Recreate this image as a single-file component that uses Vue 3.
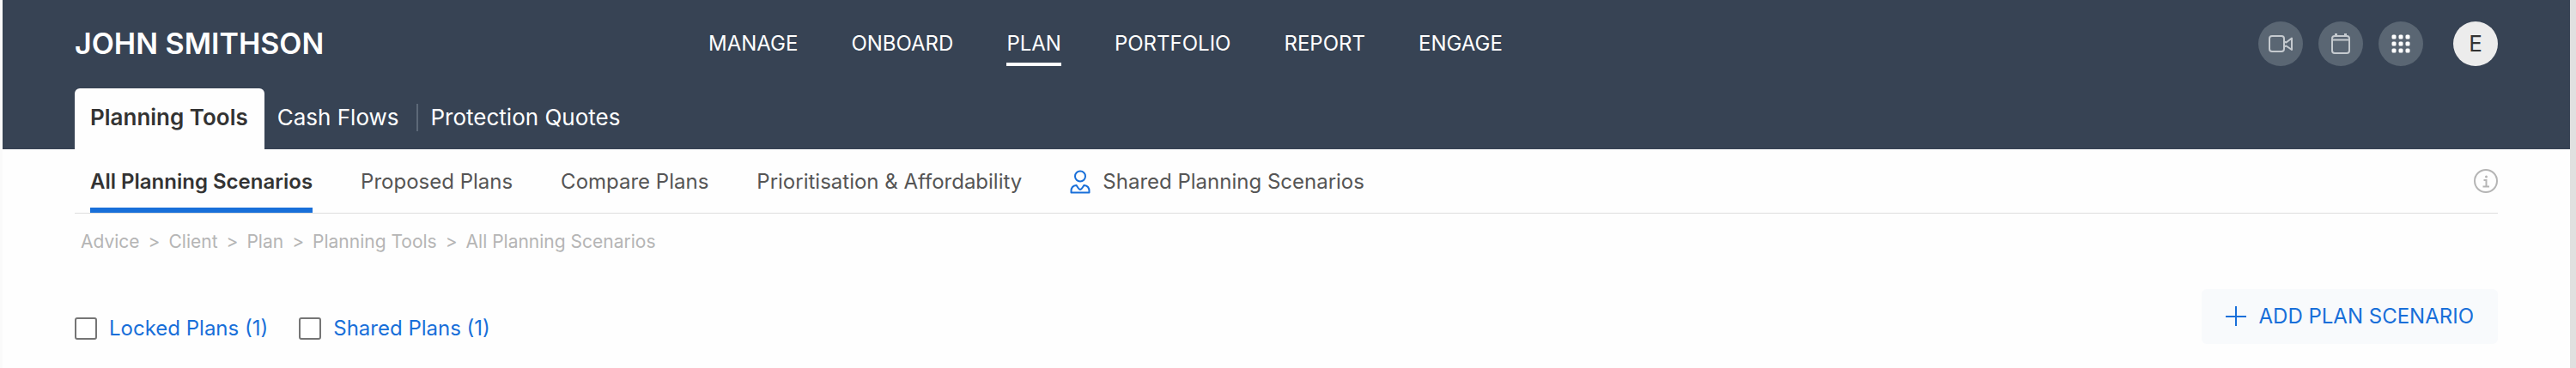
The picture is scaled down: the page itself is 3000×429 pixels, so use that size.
<script setup>
import { ref } from 'vue'

const mainNav = ['Manage', 'Onboard', 'Plan', 'Portfolio', 'Report', 'Engage']
const sections = ['Planning Tools', 'Cash Flows', 'Protection Quotes']
const views = [
  { label: 'All Planning Scenarios' },
  { label: 'Proposed Plans' },
  { label: 'Compare Plans' },
  { label: 'Prioritisation & Affordability' },
  { label: 'Shared Planning Scenarios', shared: true },
]
const crumbs = ['Advice', 'Client', 'Plan', 'Planning Tools', 'All Planning Scenarios']
const locked = ref(false)
const shared = ref(false)
</script>

<template>
  <div class="page">
    <header class="header">
      <div class="topbar">
        <div class="brand">JOHN SMITHSON</div>
        <nav class="main-nav" aria-label="Main">
          <a v-for="item in mainNav" :key="item" href="#" :class="{ active: item === 'Plan' }">{{ item.toUpperCase() }}</a>
        </nav>
        <div class="actions">
          <button class="round" type="button" aria-label="Video call">
            <svg width="30" height="22" viewBox="0 0 30 22" fill="none" stroke="currentColor" stroke-width="2">
              <rect x="2" y="2" width="17" height="18" rx="3" />
              <path d="M19 8.500L21.500 9.500L28 4.500V18L21.500 13.500L19 14.500" stroke-linejoin="round" />
            </svg>
          </button>
          <button class="round" type="button" aria-label="Calendar">
            <svg width="24" height="26" viewBox="0 0 24 26" fill="none" stroke="currentColor" stroke-width="2">
              <rect x="2" y="4" width="20" height="20" rx="3" />
              <path d="M2 8.500H22" />
              <path d="M6.500 1V4M17.500 1V4" stroke-width="3" />
            </svg>
          </button>
          <button class="round apps" type="button" aria-label="Applications">
            <svg width="22" height="22" viewBox="0 0 22 22" fill="currentColor">
              <template v-for="r in 3" :key="r">
                <rect v-for="c in 3" :key="c" :x="(c - 1) * 8 + 0.5" :y="(r - 1) * 8 + 0.5" width="5" height="5" rx="1.500" />
              </template>
            </svg>
          </button>
          <button class="round avatar" type="button" aria-label="Account">E</button>
        </div>
      </div>
      <nav class="sections" aria-label="Sections">
        <a v-for="(item, i) in sections" :key="item" href="#" :class="{ active: i === 0 }"><span>{{ item }}</span></a>
      </nav>
    </header>

    <main class="content">
      <div class="viewbar">
        <nav class="views" aria-label="Planning views">
          <a v-for="(view, i) in views" :key="view.label" href="#" :class="{ active: i === 0 }">
            <svg v-if="view.shared" class="person" width="24" height="28" viewBox="0 0 24 28" fill="none" stroke="currentColor" stroke-width="2" stroke-linejoin="round" aria-hidden="true">
              <circle cx="12" cy="7.500" r="6" />
              <path d="M1.500 26.500V24.500C1.500 20.500 4 18.500 7.500 18C8.800 19.500 10 23 12 23C14 23 15.200 19.500 16.500 18C20 18.500 22.500 20.500 22.500 24.500V26.500Z" />
            </svg>
            {{ view.label }}
          </a>
        </nav>
        <button class="info" type="button" aria-label="Information">
          <svg width="28" height="28" viewBox="0 0 28 28" fill="none" stroke="currentColor" stroke-width="2">
            <circle cx="14" cy="14" r="13" />
            <path d="M11.500 13H14.500V20.500M10.500 20.500H18" />
            <circle cx="14.500" cy="9" r="1.500" fill="currentColor" stroke="none" />
          </svg>
        </button>
      </div>

      <nav class="crumbs" aria-label="Breadcrumb">
        <template v-for="(crumb, i) in crumbs" :key="crumb">
          <span v-if="i" aria-hidden="true">&gt;</span>
          <a href="#">{{ crumb }}</a>
        </template>
      </nav>

      <div class="toolbar">
        <div class="filters">
          <label><input v-model="locked" type="checkbox" />Locked Plans (1)</label>
          <label><input v-model="shared" type="checkbox" />Shared Plans (1)</label>
        </div>
        <button class="add" type="button">
          <svg width="24" height="24" viewBox="0 0 24 24" fill="none" stroke="currentColor" stroke-width="2" aria-hidden="true">
            <path d="M12 0V23M0 12H24" />
          </svg>
          ADD PLAN SCENARIO
        </button>
      </div>
    </main>
  </div>
</template>

<style>
body {
  margin: 0;
  background: #fefefe;
}
</style>

<style scoped>
.page {
  box-sizing: border-box;
  min-height: 100vh;
  border-left: 3px solid #fafafa;
  border-right: 7px solid #e0e0e0;
  background: #fefefe;
  color: #555;
  font-family: Inter, "Liberation Sans", sans-serif;
  font-size: 24px;
  line-height: 32px;
}
a {
  color: inherit;
  text-decoration: none;
}
button {
  padding: 0;
  border: 0;
  font: inherit;
  cursor: pointer;
}
svg {
  display: block;
  flex: none;
}
.header {
  padding: 0 84px;
  background: #374354;
  color: #fff;
}
.topbar {
  display: grid;
  grid-template-columns: 738px 1fr auto;
  align-items: center;
  height: 101px;
  padding-bottom: 2px;
}
.brand {
  font-size: 34px;
  font-weight: 600;
}
.main-nav {
  display: flex;
  gap: 62px;
}
.main-nav a {
  padding: 10px 0 6px;
  border-bottom: 4px solid transparent;
}
.main-nav a.active {
  border-color: #fff;
}
.actions {
  display: flex;
  align-items: center;
  gap: 18px;
}
.round {
  display: flex;
  align-items: center;
  justify-content: center;
  width: 52px;
  height: 52px;
  border-radius: 50%;
  background: #5a6673;
  color: #c5cacf;
}
.apps {
  color: #fff;
}
.avatar {
  margin-left: 17px;
  background: #ececec;
  color: #333;
  font-size: 26px;
}
.sections {
  display: flex;
}
.sections a {
  padding: 18px 0 21px;
  font-size: 26px;
}
.sections span {
  display: block;
  padding: 0 20px 0 15px;
}
.sections a:last-child span {
  border-left: 2px solid #5c6877;
}
.sections .active {
  border-radius: 6px 6px 0 0;
  background: #fefefe;
  color: #333;
  font-weight: 600;
}
.sections .active span {
  padding: 0 19px 0 18px;
}
.content {
  padding: 0 84px;
}
.viewbar {
  display: flex;
  align-items: stretch;
  justify-content: space-between;
  height: 74px;
  padding-left: 18px;
  border-bottom: 1px solid #ddd;
}
.views {
  display: flex;
  gap: 56px;
}
.views a {
  display: flex;
  align-items: center;
  gap: 14px;
  padding-top: 7px;
  border-bottom: 6px solid transparent;
}
.views .active {
  border-color: #186fd9;
  color: #333;
  font-weight: 600;
}
.person {
  color: #186fd9;
}
.info {
  background: none;
  color: #b5b5b5;
}
.crumbs {
  display: flex;
  gap: 10px;
  padding: 17px 7px;
  color: #b5b5b5;
  font-size: 21px;
}
.toolbar {
  display: flex;
  align-items: flex-start;
  justify-content: space-between;
  padding-top: 22px;
}
.filters {
  display: flex;
  gap: 36px;
  padding-top: 30px;
  color: #186fd9;
}
.filters label {
  display: flex;
  align-items: center;
  gap: 14px;
}
.filters input {
  appearance: none;
  box-sizing: border-box;
  width: 26px;
  height: 26px;
  margin: 0;
  border: 2px solid #757575;
  border-radius: 3px;
  background: #fff;
}
.filters input:checked {
  background: #186fd9;
}
.add {
  display: flex;
  align-items: center;
  gap: 15px;
  padding: 16px 28px;
  border-radius: 6px;
  background: #f8fafc;
  color: #186fd9;
}
</style>
